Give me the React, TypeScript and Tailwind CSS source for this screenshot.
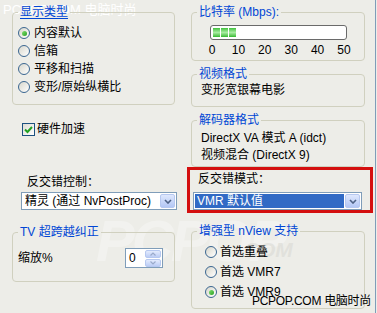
import type { ReactNode } from "react";

const FONT = "font-['Liberation_Sans','Noto_Sans_CJK_SC',sans-serif]";

function Radio({ checked }: { checked?: boolean }) {
  return (
    <span className="w-[12px] h-[12px] shrink-0 rounded-full border border-[#3a6690] bg-gradient-to-br from-[#d8d7cc] to-white flex items-center justify-center">
      {checked && (
        <span className="w-[5px] h-[5px] rounded-full bg-gradient-to-br from-[#7ede6e] to-[#22a21f]" />
      )}
    </span>
  );
}

function Group({
  title,
  underline,
  className = "",
  children,
}: {
  title: string;
  underline?: boolean;
  className?: string;
  children: ReactNode;
}) {
  return (
    <fieldset className={`border border-[#d0d0bf] rounded-[4px] px-[4px] ${className}`}>
      <legend
        className={`ml-[1px] px-[2px] leading-[14px] text-[#0046d5] ${underline ? "underline underline-offset-2" : ""}`}
      >
        {title}
      </legend>
      {children}
    </fieldset>
  );
}

function DropButton() {
  return (
    <span className="w-[15px] h-[14px] shrink-0 rounded-[2px] border border-[#b6c8f0] bg-gradient-to-b from-[#dfe8fd] to-[#b3c7f5] flex items-center justify-center">
      <svg width="8" height="5" viewBox="0 0 8 5">
        <path d="M1 1 L4 4 L7 1" fill="none" stroke="#4d6185" strokeWidth="1.6" />
      </svg>
    </span>
  );
}

function Combo({ text, selected, className = "" }: { text: string; selected?: boolean; className?: string }) {
  return (
    <div className={`h-[18px] bg-white border border-[#7f9db9] flex items-center pl-[1px] pr-[1px] gap-[1px] ${className}`}>
      <div
        className={`flex-1 h-[14px] leading-[14px] pl-[2px] whitespace-nowrap ${selected ? "bg-[#316ac5] text-white" : "text-black"}`}
      >
        {text}
      </div>
      <DropButton />
    </div>
  );
}

export default function App() {
  const ticks = ["0", "10", "20", "30", "40", "50"];
  return (
    <div className={`relative w-[377px] h-[313px] overflow-hidden bg-[#ededE8] text-[12px] text-black flex ${FONT}`}>
      {/* faint logo watermark */}
      <div className="absolute left-[96px] top-[212px] text-[58px] leading-none font-black italic tracking-tighter text-white/30 select-none">
        PCPOP
      </div>
      <div className="absolute left-[238px] top-[239px] text-[21px] leading-none font-black italic text-[#d9d9d4]/60 select-none">
        .COM
      </div>
      <div className="absolute left-[3px] top-[3px] text-[13px] leading-[14px] text-white whitespace-nowrap select-none">
        PCPOP.COM 电脑时尚
      </div>

      <div className="relative flex gap-4 pl-3 pt-[5px]">
        {/* left column */}
        <div className="w-[163px] flex flex-col">
          <Group title="显示类型" underline className="pb-[8px]">
            <div className="mt-[5px] flex flex-col">
              {["内容默认", "信箱", "平移和扫描", "变形/原始纵横比"].map((t, i) => (
                <div key={t} className="h-[18px] flex items-center gap-[4px] ml-[1px]">
                  <Radio checked={i === 0} />
                  <span>{t}</span>
                </div>
              ))}
            </div>
          </Group>

          <div className="mt-[17px] ml-[10px] h-[14px] flex items-center gap-[2px]">
            <span className="w-[13px] h-[13px] border border-[#1c5180] bg-gradient-to-br from-[#dcdcd4] to-white flex items-center justify-center">
              <svg width="9" height="9" viewBox="0 0 9 9">
                <path d="M1 4.5 L3.5 7 L8 2" fill="none" stroke="#21a121" strokeWidth="2" />
              </svg>
            </span>
            <span>硬件加速</span>
          </div>

          <div className="mt-[39px] ml-[15px] h-[14px] leading-[14px]">反交错控制：</div>
          <Combo text="精灵 (通过 NvPostProc)" className="mt-[3px] ml-[9px] w-[156px]" />

          <Group title="TV 超跨越纠正" className="mt-[15px] pb-[13px]">
            <div className="mt-[9px] h-[20px] flex items-center pl-[1px] pr-[7px]">
              <span>缩放%</span>
              <div className="ml-auto w-[38px] h-[20px] bg-white border border-[#7f9db9] flex items-center">
                <span className="flex-1 pl-[3px]">0</span>
                <div className="flex flex-col gap-[1px] mr-[1px]">
                  {[0, 1].map((k) => (
                    <span
                      key={k}
                      className="w-[16px] h-[8px] rounded-[2px] border border-[#b6c8f0] bg-gradient-to-b from-[#e3ebfd] to-[#bccdf5] flex items-center justify-center"
                    >
                      <svg width="6" height="4" viewBox="0 0 6 4">
                        <path
                          d={k === 0 ? "M0.5 3.5 L3 1 L5.5 3.5" : "M0.5 0.5 L3 3 L5.5 0.5"}
                          fill="none"
                          stroke="#9aaacb"
                          strokeWidth="1.2"
                        />
                      </svg>
                    </span>
                  ))}
                </div>
              </div>
            </div>
          </Group>
        </div>

        {/* right column */}
        <div className="w-[174px] flex flex-col">
          <Group title="比特率 (Mbps):" className="pb-[3px]">
            <div className="mt-[6px] ml-[14px] w-[137px] h-[15px] rounded-[3px] border border-[#6a6a6a] bg-white flex items-center pl-[2px] gap-[1px]">
              {[0, 1, 2].map((k) => (
                <span key={k} className="w-[7px] h-[9px] bg-gradient-to-b from-[#3cc13a] via-[#a6eca0] to-[#2fb92c]" />
              ))}
            </div>
            <div className="mt-[4px] ml-[10px] w-[144px] h-[13px] flex justify-between">
              {ticks.map((t) => (
                <span key={t} className="w-[12px] flex justify-center leading-[13px]">
                  {t}
                </span>
              ))}
            </div>
          </Group>

          <Group title="视频格式" className="mt-[6px] pb-[9px]">
            <div className="mt-[2px] ml-[5px] h-[14px] leading-[14px]">变形宽银幕电影</div>
          </Group>

          <Group title="解码器格式" className="mt-[6px] pb-[2px]">
            <div className="mt-[3px] ml-[5px] flex flex-col">
              <div className="h-[17px] leading-[17px]">DirectX VA 模式 A (idct)</div>
              <div className="h-[17px] leading-[17px]">视频混合 (DirectX 9)</div>
            </div>
          </Group>

          <div className="relative pt-[5px] pb-[3px]">
            <div className="absolute -left-[4px] -right-[8px] top-0 bottom-0 border-[3px] border-[#d40f0f]" />
            <div className="ml-[7px] h-[14px] leading-[14px]">反交错模式：</div>
            <Combo text="VMR 默认值" selected className="mt-[6px] ml-[2px] w-[169px]" />
          </div>

          <Group title="增强型 nView 支持" className="mt-[11px] pb-[6px]">
            <div className="mt-[4px] flex flex-col">
              {["首选重叠", "首选 VMR7", "首选 VMR9"].map((t, i) => (
                <div key={t} className="h-[20px] flex items-center gap-[3px] ml-[9px]">
                  <Radio checked={i === 2} />
                  <span>{t}</span>
                </div>
              ))}
            </div>
          </Group>
        </div>
      </div>

      <div className="absolute left-[252px] top-[294px] text-[12px] leading-[14px] tracking-[-0.3px] text-black whitespace-nowrap">
        PCPOP.COM 电脑时尚
      </div>

      <div className="ml-auto mr-[1px] w-[1px] bg-[#7f9db9]" />
    </div>
  );
}
